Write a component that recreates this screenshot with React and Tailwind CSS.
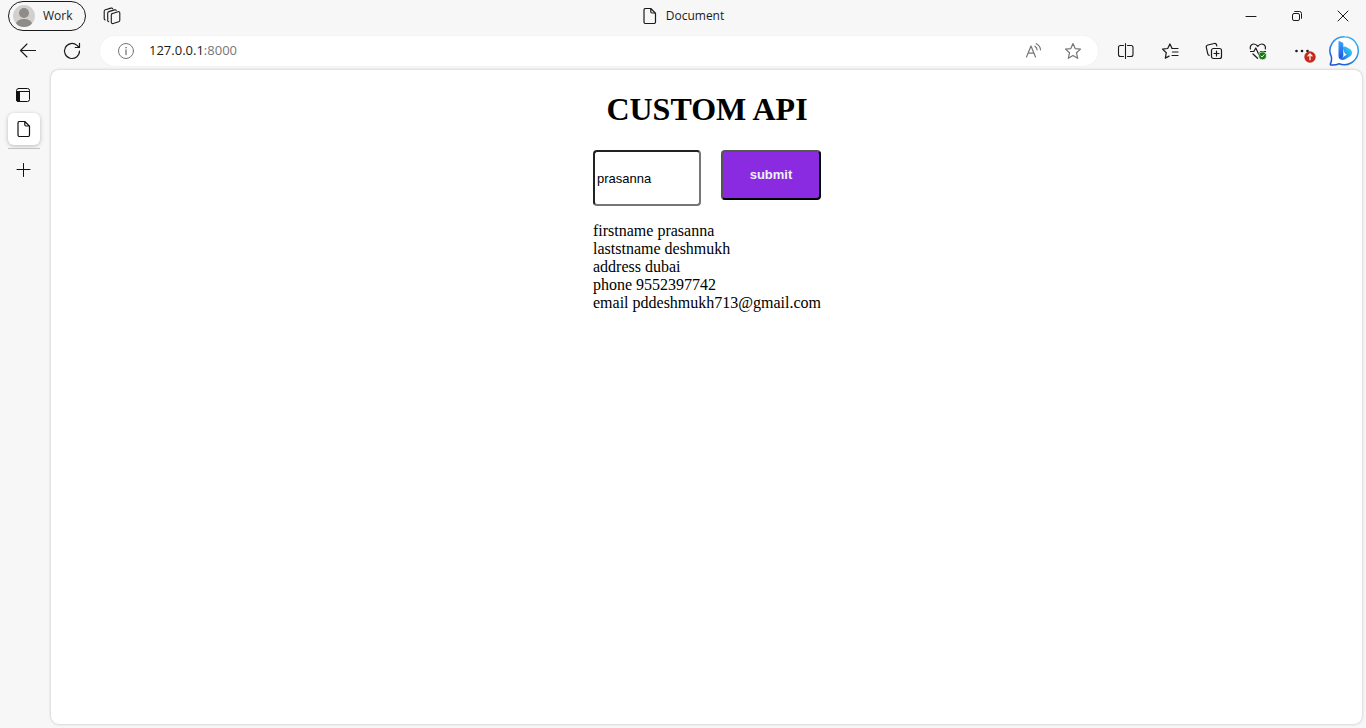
import React, { useState } from "react";

function Icon({ size = 20, className = "", children, ...rest }) {
  return (
    <svg
      width={size}
      height={size}
      viewBox={`0 0 ${size} ${size}`}
      fill="none"
      stroke="currentColor"
      strokeLinecap="round"
      strokeLinejoin="round"
      className={`shrink-0 ${className}`}
      aria-hidden="true"
      {...rest}
    >
      {children}
    </svg>
  );
}

function PageIcon() {
  return (
    <Icon size={16}>
      <path d="M3.5 .5h5.3l4.7 4.7v8.8a1.5 1.5 0 0 1-1.5 1.5H3.5A1.5 1.5 0 0 1 2 14V2A1.5 1.5 0 0 1 3.5.5ZM8.8.8v3a1.2 1.2 0 0 0 1.2 1.2h3.2" strokeWidth="1.2" />
    </Icon>
  );
}

function StarIcon() {
  return (
    <Icon>
      <path d="M10 2.6l2.2 5 5.3.5-4 3.7 1.2 5.5-4.7-2.9-4.7 2.9 1.2-5.5-4-3.7 5.3-.5z" strokeWidth="1.2" />
    </Icon>
  );
}

function BingIcon() {
  return (
    <svg width="32" height="32" viewBox="0 0 32 32" fill="none" className="shrink-0" aria-hidden="true">
      <defs>
        <linearGradient id="ring" x1="26" y1="2" x2="6" y2="30" gradientUnits="userSpaceOnUse">
          <stop stopColor="#2fb4ee" />
          <stop offset=".5" stopColor="#258ae8" />
          <stop offset="1" stopColor="#1b50d8" />
        </linearGradient>
        <linearGradient id="stem" x1="10" y1="6" x2="15" y2="24" gradientUnits="userSpaceOnUse">
          <stop stopColor="#3aa8ff" />
          <stop offset="1" stopColor="#1b4fe0" />
        </linearGradient>
        <linearGradient id="bowl" x1="23" y1="13" x2="11" y2="24" gradientUnits="userSpaceOnUse">
          <stop stopColor="#35d2f0" />
          <stop offset="1" stopColor="#1b62e6" />
        </linearGradient>
      </defs>
      <path d="M16.500 1.700a14 14 0 1 1-5.400 27c-2.600 1.200-5.600 1.500-8.200 1.200-.6-.1-.7-.7-.4-1.200 1-2.100 1.300-4.300.9-6.800A14 14 0 0 1 16.500 1.700Z" fill="#fff" stroke="url(#ring)" strokeWidth="1.500" />
      <path d="M11.200 6l3.200 1.400c.6.2.9.7.9 1.300v12.300l-2 3.400c-1.700-.4-2.800-1.600-2.800-3.300V6.500c0-.4.3-.6.7-.5Z" fill="url(#stem)" />
      <path d="M17.700 11.800l3.800 1.900c2.200 1.100 3.100 3.500 2.100 5.700-.3.800-.8 1.400-1.500 1.900l-5 3c-2.200 1.200-5.300.6-6.500-1.800 1.500.8 2.900.6 4.200-.3l3.900-2.700-1.300-.7c-.4-.2-.7-.5-.9-1l-1.600-4.500c-.4-1.100 1.200-2.300 2.800-1.500Z" fill="url(#bowl)" />
    </svg>
  );
}

function BarButton({ label, children, className = "w-11" }) {
  return (
    <button type="button" aria-label={label} className={`flex h-8 shrink-0 items-center justify-center ${className}`}>
      {children}
    </button>
  );
}

function TitleBar() {
  return (
    <div className="grid h-8 grid-cols-[1fr_auto_1fr] items-center">
      <div className="flex items-center gap-4 pl-2">
        <button type="button" className="flex h-[30px] w-[78px] items-center gap-2 rounded-full border border-[#1b1b1b] pl-1">
          <svg width="22" height="22" viewBox="0 0 22 22" aria-hidden="true">
            <clipPath id="face"><circle cx="11" cy="11" r="11" /></clipPath>
            <g clipPath="url(#face)">
              <rect width="22" height="22" fill="#d2d0ce" />
              <circle cx="11" cy="8" r="5" fill="#8f8b88" />
              <ellipse cx="11" cy="19" rx="8" ry="5" fill="#8f8b88" />
            </g>
          </svg>
          <span>Work</span>
        </button>
        <button type="button" aria-label="Workspaces">
          <Icon strokeWidth="1.1">
            <path d="M10.600 7.400l5.400-1.700c1-.3 1.800.3 1.800 1.300v7.200c0 .7-.4 1.300-1.100 1.500l-5.500 1.800c-1 .3-1.900-.3-1.900-1.300V9c0-.8.500-1.400 1.300-1.600Z" />
            <path d="M6.700 15.800c-.6-.1-1-.6-1-1.300V7.100c0-.7.500-1.300 1.200-1.500l5.500-1.700c.8-.2 1.500 0 1.800.7" />
            <path d="M3.200 14c-.6-.1-1-.6-1-1.300V5.300c0-.7.5-1.300 1.200-1.500l5.500-1.700c.8-.2 1.500 0 1.800.7" />
          </Icon>
        </button>
      </div>
      <div className="flex items-center gap-2">
        <PageIcon />
        <span>Document</span>
      </div>
      <div className="flex justify-end">
        <BarButton label="Minimize" className="w-[46px]">
          <Icon size={12}><path d="M1 6.500h10" /></Icon>
        </BarButton>
        <BarButton label="Restore" className="w-[46px]">
          <Icon size={12}>
            <rect x="1.500" y="3.500" width="7" height="7" rx="1.500" />
            <path d="M3.700 1.500h4.800a2 2 0 0 1 2 2v4.800" />
          </Icon>
        </BarButton>
        <BarButton label="Close" className="w-[46px]">
          <Icon size={12}><path d="M1 1l10 10M11 1L1 11" /></Icon>
        </BarButton>
      </div>
    </div>
  );
}

function Toolbar() {
  return (
    <div className="flex h-[38px] items-center pr-0.5 pl-1.5">
      <BarButton label="Back">
        <Icon><path d="M17.500 9.500h-15M9 3L2.500 9.500 9 16" strokeWidth="1.100" /></Icon>
      </BarButton>
      <BarButton label="Refresh">
        <Icon><path d="M17.500 10A7.500 7.500 0 1 1 15 4.400l2 1.800M17.500 2.300v4.200h-4.200" strokeWidth="1.200" /></Icon>
      </BarButton>
      <div className="mx-1.5 flex h-[30px] min-w-0 flex-1 items-center rounded-full bg-white pr-[5px] pl-4 shadow-[0_0_2px_rgba(0,0,0,0.06)]">
        <button type="button" aria-label="View site information" className="text-[#767676]">
          <Icon>
            <circle cx="10" cy="10" r="7.500" />
            <path d="M10 9v4.500" strokeWidth="1.300" />
            <circle cx="10" cy="6.700" r=".5" fill="currentColor" strokeWidth=".5" />
          </Icon>
        </button>
        <div
          role="textbox"
          aria-label="Address"
          tabIndex={0}
          className="ml-[13px] min-w-0 flex-1 text-[13px] text-[#767676]"
        >
          <span className="text-[#1b1b1b]">127.0.0.1</span>:8000
        </div>
        <BarButton label="Read aloud" className="w-10 text-[#767676]">
          <Icon>
            <path d="M3.500 16L8 5l4.500 11M5.200 12.200h5.600" strokeWidth="1.200" />
            <path d="M12 5.200c1.300.9 2 2.100 2.100 3.600M13.300 2.700c2.600 1.300 4 3.400 4.200 6.100" strokeWidth="1.200" />
          </Icon>
        </BarButton>
        <BarButton label="Add to favorites" className="w-10 text-[#767676]">
          <StarIcon />
        </BarButton>
      </div>
      <BarButton label="Split screen">
        <Icon strokeWidth="1.100">
          <path d="M7.500 4.500h-3a2 2 0 0 0-2 2v7a2 2 0 0 0 2 2h3M11.500 4.500h3.500a2 2 0 0 1 2 2v7a2 2 0 0 1-2 2h-3.500M9.500 2.500v15" />
        </Icon>
      </BarButton>
      <BarButton label="Favorites">
        <Icon strokeWidth="1.200">
          <path d="M12 7.200L9.900 2.900 7.700 7.500l-5.200.6 3.800 3.600-1 5.400 3.800-2" />
          <path d="M12 7.500h6M12.500 11H18M12 14.500h6" />
        </Icon>
      </BarButton>
      <BarButton label="Collections">
        <Icon strokeWidth="1.200">
          <rect x="7.500" y="7.500" width="10" height="10" rx="2" />
          <path d="M12.500 10v5M10 12.500h5M5.200 14.300a2 2 0 0 1-1.400-1.500L2.300 6.400a2 2 0 0 1 1.500-2.400l6.500-1.500a2 2 0 0 1 2.300 1.500l.2.800" />
        </Icon>
      </BarButton>
      <BarButton label="Browser essentials">
        <Icon strokeWidth="1.200">
          <path d="M2.400 8C1.700 5.300 3.200 3.200 5.600 3c1.900-.1 3.200.9 4.200 2.300C10.800 3.900 12.200 2.900 14 3c2.500.2 4 2.400 3.300 5M2.500 10.500h3.300l2-3.500 3 6.500 2-3h4.700M5 13l4.500 4.300" />
          <circle cx="14.500" cy="14.800" r="4" fill="#107c10" stroke="#f7f7f7" strokeWidth=".7" />
          <path d="M13 15l1.100 1.100 2-2.400" stroke="#fff" strokeWidth=".9" />
        </Icon>
      </BarButton>
      <BarButton label="Settings and more">
        <span className="relative">
          <Icon>
            <g fill="currentColor" stroke="none">
              <circle cx="4.500" cy="10" r="1.300" />
              <circle cx="10" cy="10" r="1.300" />
              <circle cx="15.500" cy="10" r="1.300" />
            </g>
          </Icon>
          <svg width="12" height="12" viewBox="0 0 12 12" className="absolute top-2.5 left-3" aria-hidden="true">
            <circle cx="6" cy="6" r="5.700" fill="#c42b1c" />
            <path d="M6 9.300V3M3.600 5.300L6 2.900l2.400 2.400" fill="none" stroke="#fff" strokeWidth="1.200" />
          </svg>
        </span>
      </BarButton>
      <BarButton label="Bing chat" className="w-10">
        <BingIcon />
      </BarButton>
    </div>
  );
}

function TabStrip() {
  return (
    <nav aria-label="Tabs" className="flex w-12 shrink-0 flex-col items-center pt-[9px] text-[#111]">
      <button type="button" aria-label="Tab actions" className="flex size-8 items-center justify-center">
        <Icon size={16}>
          <rect x=".5" y="1.500" width="13" height="13" rx="2" />
          <path d="M1 4.500h12.500" />
          <path d="M.5 4.500h3v10H2A1.500 1.500 0 0 1 .5 13z" fill="currentColor" />
        </Icon>
      </button>
      <button type="button" aria-label="Document" className="mt-0.5 flex size-8 items-center justify-center rounded-md bg-white shadow-[0_1px_4px_rgba(0,0,0,0.25)]">
        <PageIcon />
      </button>
      <hr className="mt-[3px] w-8 border-t border-[#c4c4c4]" />
      <button type="button" aria-label="New tab" className="mt-1 flex size-8 items-center justify-center">
        <Icon size={16}><path d="M7.500 2.500v13M1 8.500h13" /></Icon>
      </button>
    </nav>
  );
}

function CustomApi() {
  const [name, setName] = useState("prasanna");
  return (
    <main className="flex flex-1 flex-col items-center rounded-lg bg-white pl-px font-['Liberation_Serif',serif] text-base leading-[18px] text-black shadow-[0_0_3px_rgba(0,0,0,0.25)]">
      <h1 className="mt-[21px] text-[32px] leading-9 font-bold">CUSTOM API</h1>
      <div className="mt-[23px]">
        <form className="flex items-start gap-5" onSubmit={(e) => e.preventDefault()}>
          <input
            type="text"
            aria-label="First name"
            value={name}
            onChange={(e) => setName(e.target.value)}
            className="h-14 w-[108px] rounded border-2 border-t-[#222] border-r-[#767676] border-b-[#767676] border-l-[#222] bg-white px-0.5 font-['Liberation_Sans',sans-serif] text-[13px] outline-none"
          />
          <button
            type="submit"
            className="h-[50px] w-[100px] rounded border-2 border-t-[#555] border-r-black border-b-black border-l-[#555] bg-[#8a2be2] font-['Liberation_Sans',sans-serif] text-[13px] font-bold text-[#f0f0f0]"
          >
            submit
          </button>
        </form>
        <div className="mt-4">
          <p>firstname prasanna</p>
          <p>laststname deshmukh</p>
          <p>address dubai</p>
          <p>phone 9552397742</p>
          <p>email pddeshmukh713@gmail.com</p>
        </div>
      </div>
    </main>
  );
}

export default function App() {
  return (
    <div className="flex min-h-screen flex-col bg-[#f7f7f7] font-['Open_Sans','Noto_Sans',sans-serif] text-xs text-[#1b1b1b]">
      <header>
        <TitleBar />
        <Toolbar />
      </header>
      <div className="flex flex-1 pr-1 pb-1">
        <TabStrip />
        <div className="ml-[3px] flex flex-1">
          <CustomApi />
        </div>
      </div>
    </div>
  );
}
